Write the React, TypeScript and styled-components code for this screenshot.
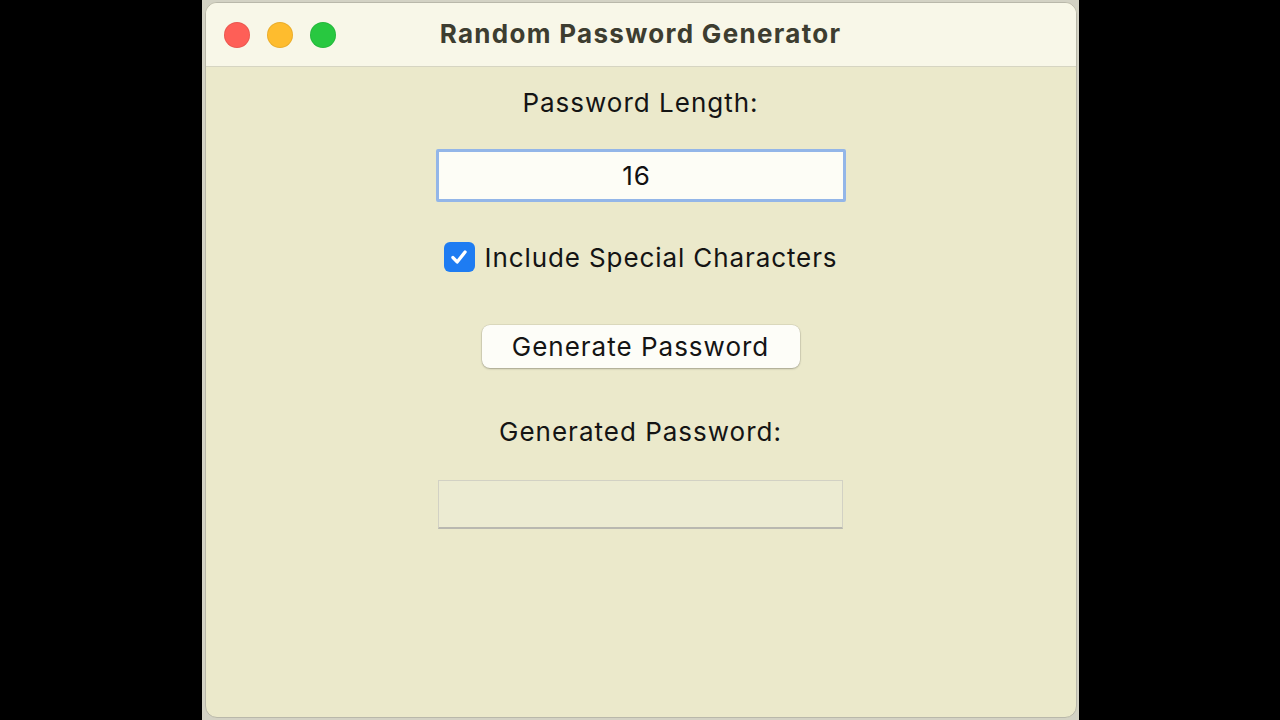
import styled, { createGlobalStyle } from "styled-components";
import React, { useState } from "react";

const GlobalStyle = createGlobalStyle`
  html, body {
    margin: 0;
    padding: 0;
    background: #000;
  }
  body {
    font-family: Inter, "Liberation Sans", Arial, sans-serif;
  }
`;

const Screen = styled.div`
  width: 1280px;
  height: 720px;
  display: flex;
  justify-content: center;
  background: #000;
`;

const Stage = styled.div`
  width: 877px;
  height: 720px;
  box-sizing: border-box;
  padding: 2px 2px 2px 3px;
  background: #d3d2c4;
`;

const Window = styled.div`
  height: 100%;
  display: flex;
  flex-direction: column;
  background: #ebe9cb;
  border: 1px solid #b9b8aa;
  border-radius: 12px;
  overflow: hidden;
  box-sizing: border-box;
`;

const TitleBar = styled.div`
  position: relative;
  height: 63px;
  flex-shrink: 0;
  display: flex;
  align-items: center;
  justify-content: center;
  background: #f8f7e8;
  border-bottom: 1px solid #d6d5c2;
`;

const Lights = styled.div`
  position: absolute;
  left: 18px;
  top: 19px;
  display: flex;
  gap: 17px;
`;

const Light = styled.span<{ $color: string }>`
  width: 26px;
  height: 26px;
  border-radius: 50%;
  background: ${(p) => p.$color};
  box-shadow: inset 0 0 0 1px rgba(0, 0, 0, 0.08);
`;

const Title = styled.h1`
  margin: 0 0 2px;
  font-size: 26px;
  font-weight: 700;
  letter-spacing: 1.3px;
  color: #3d3d30;
`;

const Content = styled.div`
  display: flex;
  flex-direction: column;
  align-items: center;
  letter-spacing: 1px;
`;

const Label = styled.div<{ $top: number }>`
  margin-top: ${(p) => p.$top}px;
  font-size: 26px;
  line-height: 30px;
  color: #141414;
`;

const LengthInput = styled.input`
  margin-top: 31px;
  width: 410px;
  height: 53px;
  box-sizing: border-box;
  padding: 0 8px 0 0;
  border: 3px solid #93b6e8;
  border-radius: 2px;
  background: #fdfdf6;
  font-family: Inter, "Liberation Sans", Arial, sans-serif;
  font-size: 26px;
  letter-spacing: 1px;
  color: #111;
  text-align: center;
  outline: none;
  caret-color: #111;
`;

const CheckRow = styled.label`
  margin-top: 40px;
  display: flex;
  align-items: center;
  gap: 10px;
  height: 30px;
  font-size: 26px;
  letter-spacing: 0.9px;
  color: #141414;
`;

const Box = styled.span`
  width: 31px;
  height: 30px;
  border-radius: 6px;
  background: #1e7cf2;
  display: flex;
  align-items: center;
  justify-content: center;
`;

const GenerateButton = styled.button`
  margin-top: 53px;
  width: 318px;
  height: 43px;
  border: none;
  border-radius: 8px;
  background: #fdfdf8;
  box-shadow: 0 1px 2px rgba(0, 0, 0, 0.25), 0 0 0 0.5px rgba(0, 0, 0, 0.12);
  font-family: Inter, "Liberation Sans", Arial, sans-serif;
  font-size: 26px;
  letter-spacing: 1px;
  color: #141414;
  cursor: pointer;
`;

const Output = styled.input`
  margin-top: 33px;
  width: 405px;
  height: 49px;
  box-sizing: border-box;
  border: 1px solid #d2d1c4;
  border-bottom: 2px solid #b9b8b0;
  background: #ecebd2;
  font-family: Inter, "Liberation Sans", Arial, sans-serif;
  font-size: 22px;
  outline: none;
`;

export default function App() {
  const [length, setLength] = useState("16");
  const [special, setSpecial] = useState(true);
  const [password] = useState("");

  return (
    <>
      <GlobalStyle />
      <Screen>
        <Stage>
          <Window>
            <TitleBar>
              <Lights>
                <Light $color="#fe5f57" />
                <Light $color="#febc2e" />
                <Light $color="#28c840" />
              </Lights>
              <Title>Random Password Generator</Title>
            </TitleBar>
            <Content>
              <Label $top={21}>Password Length:</Label>
              <LengthInput
                value={length}
                autoFocus
                onChange={(e: React.ChangeEvent<HTMLInputElement>) =>
                  setLength(e.target.value)
                }
              />
              <CheckRow onClick={() => setSpecial(!special)}>
                <Box>
                  {special ? (
                    <svg width="22" height="22" viewBox="0 0 20 20">
                      <path
                        d="M4.5 10.5 L8.3 14.5 L15.5 5.5"
                        fill="none"
                        stroke="#fff"
                        strokeWidth="3"
                        strokeLinecap="round"
                        strokeLinejoin="round"
                      />
                    </svg>
                  ) : null}
                </Box>
                Include Special Characters
              </CheckRow>
              <GenerateButton>Generate Password</GenerateButton>
              <Label $top={49}>Generated Password:</Label>
              <Output value={password} readOnly />
            </Content>
          </Window>
        </Stage>
      </Screen>
    </>
  );
}
